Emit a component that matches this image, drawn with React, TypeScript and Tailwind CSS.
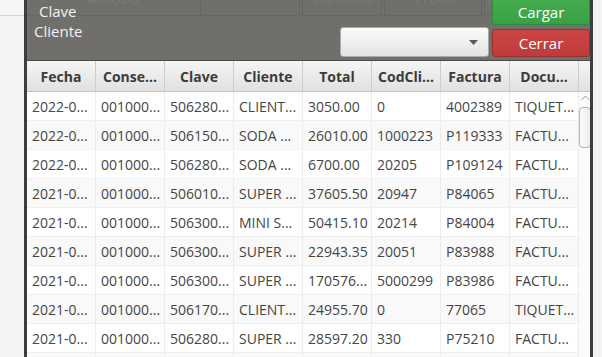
import React from "react";

const headers = ["Fecha", "Conse...", "Clave", "Cliente", "Total", "CodCli...", "Factura", "Docu..."];

const rows: string[][] = [
  ["2022-0...", "001000...", "506280...", "CLIENT...", "3050.00", "0", "4002389", "TIQUET..."],
  ["2022-0...", "001000...", "506150...", "SODA ...", "26010.00", "1000223", "P119333", "FACTU..."],
  ["2022-0...", "001000...", "506280...", "SODA ...", "6700.00", "20205", "P109124", "FACTU..."],
  ["2021-0...", "001000...", "506010...", "SUPER ...", "37605.50", "20947", "P84065", "FACTU..."],
  ["2021-0...", "001000...", "506300...", "MINI S...", "50415.10", "20214", "P84004", "FACTU..."],
  ["2021-0...", "001000...", "506300...", "SUPER ...", "22943.35", "20051", "P83988", "FACTU..."],
  ["2021-0...", "001000...", "506300...", "SUPER ...", "170576...", "5000299", "P83986", "FACTU..."],
  ["2021-0...", "001000...", "506170...", "CLIENT...", "24955.70", "0", "77065", "TIQUET..."],
  ["2021-0...", "001000...", "506280...", "SUPER ...", "28597.20", "330", "P75210", "FACTU..."],
  ["", "", "", "", "", "", "", ""],
];

export default function App() {
  return (
    <div
      className="w-[602px] h-[357px] overflow-hidden flex bg-[#f2f2f2]"
      style={{ fontFamily: '"Open Sans", "Noto Sans", sans-serif' }}
    >
      {/* left light strip */}
      <div className="w-[24px] shrink-0 flex flex-col">
        <div className="h-[16px] bg-[#f6f6f6] border-b border-[#d4d4d4]" />
        <div className="flex-1 bg-[#f3f3f3]" />
      </div>
      <div className="w-[3px] shrink-0 bg-[#3d3d3d]" />

      {/* main dimmed panel */}
      <div className="w-[563px] shrink-0 flex flex-col bg-[#706f6c]">
        {/* top area */}
        <div className="relative h-[60px] flex">
          {/* faint background fields (seen through overlay) */}
          <div className="absolute left-0 top-0 w-full h-[17px] flex text-[14px] text-[#7a7976] leading-none">
            <div className="w-[173px] h-[16px] border-b border-[#67665f] relative">
              <span className="absolute left-[61px] -top-[8px]">Artículo</span>
            </div>
            <div className="w-[100px] h-[16px] border border-t-0 border-[#67665f]" />
            <div className="w-[80px] h-[16px] border border-t-0 border-[#67665f] ml-[2px] relative">
              <span className="absolute left-[11px] -top-[8px]">Cantidad</span>
            </div>
            <div className="w-[98px] h-[16px] border border-t-0 border-[#67665f] ml-[2px] relative">
              <span className="absolute left-[30px] -top-[8px]">Precio</span>
            </div>
            <div className="w-[10px] h-[16px] border-l border-b border-[#67665f] ml-[2px] relative overflow-hidden">
              <span className="absolute left-[2px] -top-[8px] whitespace-nowrap">Desc %</span>
            </div>
          </div>

          {/* labels */}
          <div className="relative flex flex-col text-[15px] text-[#f2f2f2] leading-[20px]">
            <span className="pl-[12px] pt-[1px]">Clave</span>
            <span className="pl-[7px]">Cliente</span>
          </div>

          <div className="flex-1" />

          {/* combo */}
          <div className="relative self-end mb-[3px] mr-[3px] w-[149px] h-[30px] rounded-[3px] border border-[#a9a9a9] bg-gradient-to-b from-[#fbfbfb] to-[#e3e3e3] flex items-center justify-end pr-[10px]">
            <svg width="9" height="5" viewBox="0 0 9 5">
              <path d="M0 0 H9 L4.5 5 Z" fill="#5a5a5a" />
            </svg>
          </div>

          {/* buttons */}
          <div className="relative w-[98px] flex flex-col gap-[4px] pb-[3px] pt-0">
            <div className="h-[25px] rounded-b-[3px] bg-gradient-to-b from-[#44ad4f] to-[#3aa046] border border-t-0 border-[#2f8d3a] flex items-center justify-center text-[15px] text-white">
              Cargar
            </div>
            <div className="h-[28px] rounded-[3px] bg-gradient-to-b from-[#cb4544] to-[#bf3b3b] border border-[#9e2e2e] flex items-center justify-center text-[15px] text-white">
              Cerrar
            </div>
          </div>
        </div>

        {/* table */}
        <div className="flex-1 flex flex-col bg-white border-t border-[#4a4a48] overflow-hidden">
          {/* header */}
          <div className="flex h-[31px] shrink-0 border-b border-[#c4c4c4] bg-gradient-to-b from-[#f5f5f5] to-[#e1e1e1]">
            {headers.map((h) => (
              <div
                key={h}
                className="w-[69px] shrink-0 border-r border-[#cdcdcd] flex items-center justify-center text-[14px] font-bold text-[#3b3b3b]"
              >
                {h}
              </div>
            ))}
            <div className="flex-1" />
          </div>

          {/* body */}
          <div className="flex flex-1">
            <div className="w-[552px] shrink-0 flex flex-col">
              {rows.map((r, i) => (
                <div
                  key={i}
                  className={`flex h-[29px] shrink-0 border-b border-[#efefef] ${i % 2 === 0 ? "bg-white" : "bg-[#f9f9f9]"}`}
                >
                  {r.map((c, j) => (
                    <div
                      key={j}
                      className="w-[69px] shrink-0 border-r border-[#ececec] flex items-center pl-[5px] text-[14px] text-[#454545] whitespace-nowrap overflow-hidden"
                    >
                      {c}
                    </div>
                  ))}
                </div>
              ))}
            </div>
            {/* scrollbar */}
            <div className="flex-1 flex flex-col items-center bg-[#fbfbfb] pt-[2px] pb-[2px]">
              <svg width="9" height="6" viewBox="0 0 9 6" className="mt-[1px]">
                <path d="M0.5 5 L4.5 1 L8.5 5" fill="none" stroke="#9a9a9a" strokeWidth="1" />
              </svg>
              <div className="mt-[6px] w-[12px] h-[41px] rounded-[4px] border border-[#b3b3b3] bg-gradient-to-r from-[#fdfdfd] to-[#ececec]" />
              <div className="flex-1" />
              <svg width="9" height="6" viewBox="0 0 9 6" className="mb-[3px]">
                <path d="M0.5 1 L4.5 5 L8.5 1" fill="none" stroke="#9a9a9a" strokeWidth="1" />
              </svg>
            </div>
          </div>
        </div>
      </div>

      <div className="w-[3px] shrink-0 bg-[#3d3d3d]" />
      <div className="flex-1 bg-[#f3f3f3]" />
    </div>
  );
}
